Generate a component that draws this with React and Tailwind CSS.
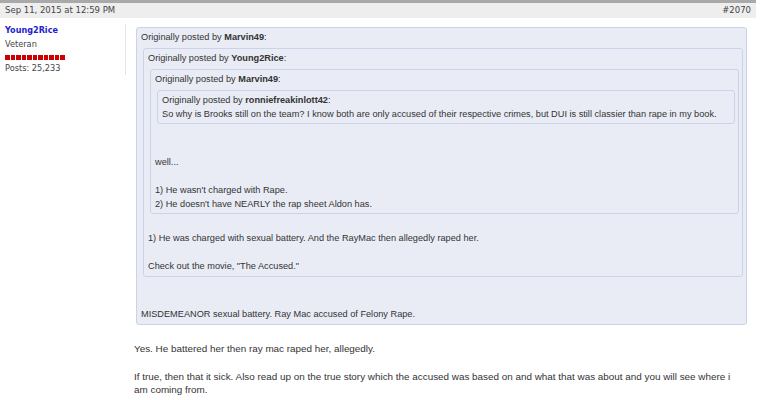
export default function App() {
  const box = "border border-[#c9d4ea] rounded-[3px] bg-[#e9ecf5]";
  const q = "font-['Liberation_Sans',Arial,sans-serif] text-[9.2px] leading-[14px] text-[#333]";
  return (
    <div className="w-[763px] h-[400px] overflow-hidden bg-white">
      <div className="w-[756px]">
        <div className="h-[3px] bg-[#a9a9a9]" />
        <div className="h-[15px] bg-[#eeeeee] flex items-center justify-between px-[5px] font-['DejaVu_Sans',Verdana,sans-serif] text-[8.5px] text-[#444]">
          <span>Sep 11, 2015 at 12:59 PM</span>
          <span>#2070</span>
        </div>
        <div className="flex items-start pt-[6px]">
          <div className="w-[126px] shrink-0 border-r border-[#e4e4e4] pl-[5px] font-['DejaVu_Sans',Verdana,sans-serif] text-[8.2px] text-[#444] leading-[14px]">
            <div className="font-bold text-[#2323cc] text-[8.1px] leading-[13px]">Young2Rice</div>
            <div>Veteran</div>
            <div className="flex gap-[1px] mt-[3.5px] mb-[1.5px]">
              {Array.from({ length: 11 }).map((_, i) => (
                <div key={i} className="w-[4.5px] h-[5px] bg-[#cc0000]" />
              ))}
            </div>
            <div>Posts: 25,233</div>
          </div>
          <div className={"ml-[10px] mr-[9px] mt-[3px] flex-1 " + q}>
            <div className={box + " pl-[4px] pt-[2px] pb-[3px]"}>
              <div>Originally posted by <b>Marvin49</b>:</div>
              <div className={box + " mt-[4px] ml-[2px] mr-[3px] pl-[4px] pt-[2px] pb-[3px]"}>
                <div>Originally posted by <b>Young2Rice</b>:</div>
                <div className={box + " mt-[4px] ml-[2px] mr-[3px] pl-[4px] pt-[2px] pb-[2px]"}>
                  <div>Originally posted by <b>Marvin49</b>:</div>
                  <div className={box + " mt-[4px] ml-[2px] mr-[3px] pl-[4px] pt-[2px] pb-[2px]"}>
                    <div>Originally posted by <b>ronniefreakinlott42</b>:</div>
                    <div>So why is Brooks still on the team? I know both are only accused of their respective crimes, but DUI is still classier than rape in my book.</div>
                  </div>
                  <div className="mt-[31px]">well...</div>
                  <div className="mt-[14px]">1) He wasn't charged with Rape.</div>
                  <div>2) He doesn't have NEARLY the rap sheet Aldon has.</div>
                </div>
                <div className="mt-[17px]">1) He was charged with sexual battery. And the RayMac then allegedly raped her.</div>
                <div className="mt-[14px]">Check out the movie, "The Accused."</div>
              </div>
              <div className="mt-[30px]">MISDEMEANOR sexual battery. Ray Mac accused of Felony Rape.</div>
            </div>
            <div className="-ml-[2px] mr-[4px] mt-[17px] text-[9.9px] leading-[13px]">
              <div>Yes. He battered her then ray mac raped her, allegedly.</div>
              <div className="mt-[15px]">If true, then that it sick. Also read up on the true story which the accused was based on and what that was about and you will see where i am coming from.</div>
            </div>
          </div>
        </div>
      </div>
    </div>
  );
}
